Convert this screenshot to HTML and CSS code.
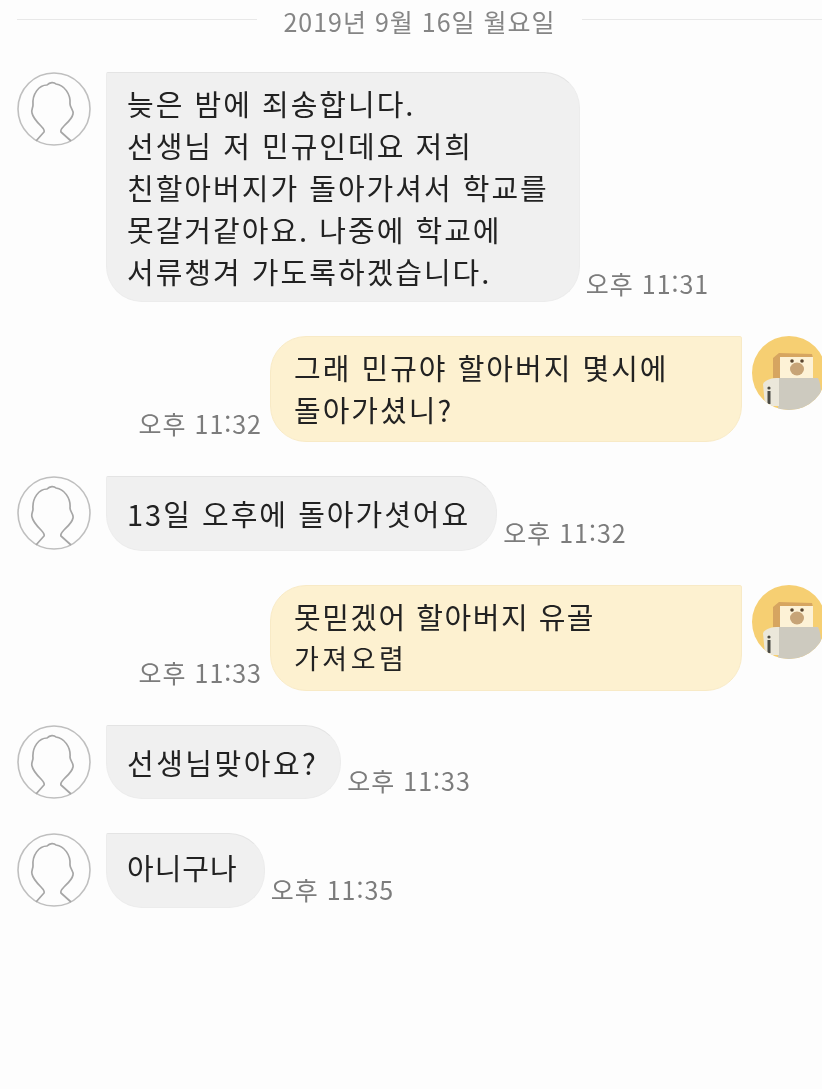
FILE: index.html
```html
<!DOCTYPE html>
<html lang="ko">
<head>
    <meta charset="UTF-8">
    <title>대화</title>
    <link rel="stylesheet" href="styles.css">
</head>
<body>
    <svg class="defs" width="0" height="0">
        <symbol id="person" viewBox="0 0 74 74">
            <circle cx="37" cy="37" r="36" fill="#fdfdfd" stroke="#bfbfbf" stroke-width="1.6"/>
            <path d="M19 69 L27 60 C28 58 26 56 24 54 C21 51 16 46 15 41 C14 38 16 36 16 33 C15 22 22 13 30 13 C33 10 37 10 39 12 C47 13 54 22 53 32 C53 36 57 38 56 42 C55 47 49 52 47 54 C45 56 43 58 44 60 L54 69" fill="none" stroke="#a6a6a6" stroke-width="1.7" stroke-linejoin="round"/>
        </symbol>
        <symbol id="bear" viewBox="0 0 74 74">
            <clipPath id="bearClip"><circle cx="37" cy="37" r="37"/></clipPath>
            <g clip-path="url(#bearClip)">
                <rect width="74" height="74" fill="#f6cf72"/>
                <path d="M21 22 L27 17 L60 18 L61 22 L28 22 V42 H21 Z" fill="#d6a560"/>
                <rect x="28" y="21" width="33" height="21" fill="#fdf2d6"/>
                <circle cx="40" cy="25" r="1.800" fill="#5a4630"/>
                <circle cx="50" cy="25" r="1.800" fill="#5a4630"/>
                <ellipse cx="45" cy="33" rx="7" ry="6.500" fill="#c7a477"/>
                <path d="M26 42 H66 C70 50 70 64 66 74 H26 Z" fill="#cdcabf"/>
                <path d="M11 48 C14 43 20 42 27 42 V70 H13 Z" fill="#ebe7da"/>
                <rect x="15.500" y="55" width="3" height="13" fill="#4a4a44"/>
                <circle cx="17" cy="52" r="1.600" fill="#4a4a44"/>
            </g>
        </symbol>
    </svg>

    <div class="chat">
        <div class="date-row">
            <span class="date-line"></span>
            <span class="date">2019년 9월 16일 월요일</span>
            <span class="date-line"></span>
        </div>

        <div class="row">
            <svg class="avatar"><use href="#person"/></svg>
            <div class="bubble tall">
                <div class="line">늦은 밤에 죄송합니다.</div>
                <div class="line">선생님 저 민규인데요 저희</div>
                <div class="line">친할아버지가 돌아가셔서 학교를</div>
                <div class="line">못갈거같아요. 나중에 학교에</div>
                <div class="line">서류챙겨 가도록하겠습니다.</div>
            </div>
            <span class="time">오후 11:31</span>
        </div>

        <div class="row me">
            <span class="time">오후 11:32</span>
            <div class="bubble">
                <div class="line">그래 민규야 할아버지 몇시에</div>
                <div class="line">돌아가셨니?</div>
            </div>
            <svg class="avatar"><use href="#bear"/></svg>
        </div>

        <div class="row">
            <svg class="avatar"><use href="#person"/></svg>
            <div class="bubble">
                <div class="line">13일 오후에 돌아가셧어요</div>
            </div>
            <span class="time">오후 11:32</span>
        </div>

        <div class="row me">
            <span class="time">오후 11:33</span>
            <div class="bubble">
                <div class="line tight">못믿겠어 할아버지 유골</div>
                <div class="line small">가져오렴</div>
            </div>
            <svg class="avatar"><use href="#bear"/></svg>
        </div>

        <div class="row">
            <svg class="avatar"><use href="#person"/></svg>
            <div class="bubble question">
                <div class="line">선생님맞아요?</div>
            </div>
            <span class="time">오후 11:33</span>
        </div>

        <div class="row">
            <svg class="avatar"><use href="#person"/></svg>
            <div class="bubble last">
                <div class="line">아니구나</div>
            </div>
            <span class="time">오후 11:35</span>
        </div>
    </div>
</body>
</html>
```

FILE: styles.css
```css
html, body {
    margin: 0;
    height: 1089px;
    overflow: hidden;
    background: #fdfdfd;
}
body {
    font-family: "Noto Sans CJK KR", "Noto Sans", sans-serif;
    color: #222;
}
.defs {
    position: absolute;
}
.chat {
    display: flex;
    flex-direction: column;
    gap: 34px;
    padding-left: 17px;
    filter: blur(0.5px);
}
.date-row {
    display: flex;
    align-items: center;
    gap: 26px;
    height: 39px;
    margin-bottom: -1px;
}
.date-line {
    flex: 1;
    height: 1px;
    background: #e8e8e8;
}
.date {
    margin-top: 2px;
    font-size: 25px;
    letter-spacing: 1px;
    color: #858585;
    white-space: nowrap;
}
.row {
    display: flex;
    align-items: flex-start;
}
.avatar {
    width: 74px;
    height: 74px;
    flex: none;
}
.bubble {
    display: flex;
    flex-direction: column;
    justify-content: center;
    box-sizing: border-box;
    min-height: 75px;
    margin-left: 15px;
    padding: 9px 26px 11px 20px;
    background: #f0f0f0;
    border: 1px solid #ececec;
    border-top-color: #e4e4e4;
    border-radius: 2px 36px 36px 36px;
}
.tall {
    padding-right: 30px;
    padding-bottom: 9px;
}
.question {
    min-height: 74px;
    padding-right: 22px;
    padding-bottom: 9px;
}
.last {
    padding-bottom: 17px;
}
.line {
    font-size: 29px;
    line-height: 42px;
    letter-spacing: 2px;
    white-space: nowrap;
}
.question .line {
    letter-spacing: 2.5px;
}
.last .line {
    letter-spacing: 1px;
}
.tight {
    letter-spacing: 1.5px;
}
.small {
    font-size: 27px;
    letter-spacing: 3.5px;
}
.time {
    align-self: flex-end;
    margin: 0 0 5px 6px;
    font-size: 25px;
    line-height: 28px;
    letter-spacing: 1px;
    color: #7c7c7c;
    white-space: nowrap;
}
.me {
    justify-content: flex-end;
    margin-right: -4px;
}
.me .bubble {
    width: 472px;
    margin: 0 10px 0 8px;
    padding-left: 23px;
    background: #fdf1d0;
    border-color: #f8eac6;
    border-radius: 36px 2px 36px 36px;
}
.me .time {
    margin-left: 0;
}
```
